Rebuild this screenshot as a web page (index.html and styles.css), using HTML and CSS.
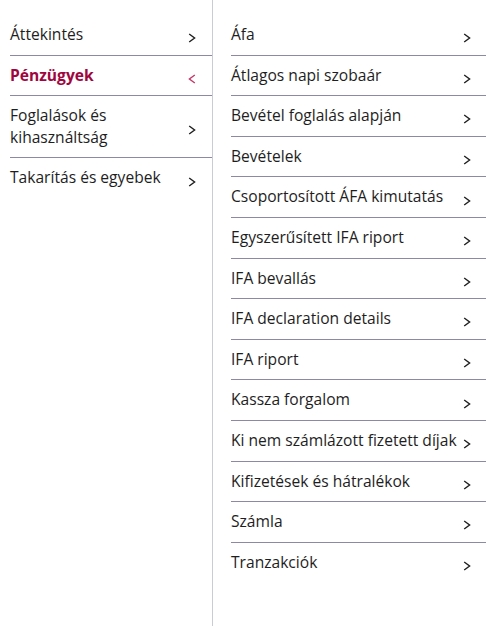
FILE: index.html
```html
<!DOCTYPE html>
<html lang="hu">
<head>
<meta charset="utf-8">
<title>Menü</title>
<link rel="stylesheet" href="styles.css">
</head>
<body>
<div class="layout">
  <nav class="nav nav-left">
    <a class="item"><span class="label">Áttekintés</span><svg class="chev" viewBox="0 0 8 10"><path d="M1.2 1 L6.6 5 L1.2 9"/></svg></a>
    <a class="item active"><span class="label">Pénzügyek</span><svg class="chev" viewBox="0 0 8 10"><path d="M6.8 1 L1.4 5 L6.8 9"/></svg></a>
    <a class="item"><span class="label">Foglalások és<br>kihasználtság</span><svg class="chev" viewBox="0 0 8 10"><path d="M1.2 1 L6.6 5 L1.2 9"/></svg></a>
    <a class="item last"><span class="label">Takarítás és egyebek</span><svg class="chev" viewBox="0 0 8 10"><path d="M1.2 1 L6.6 5 L1.2 9"/></svg></a>
  </nav>
  <nav class="nav nav-right">
    <a class="item"><span class="label">Áfa</span><svg class="chev" viewBox="0 0 8 10"><path d="M1.2 1 L6.6 5 L1.2 9"/></svg></a>
    <a class="item"><span class="label">Átlagos napi szobaár</span><svg class="chev" viewBox="0 0 8 10"><path d="M1.2 1 L6.6 5 L1.2 9"/></svg></a>
    <a class="item"><span class="label">Bevétel foglalás alapján</span><svg class="chev" viewBox="0 0 8 10"><path d="M1.2 1 L6.6 5 L1.2 9"/></svg></a>
    <a class="item"><span class="label">Bevételek</span><svg class="chev" viewBox="0 0 8 10"><path d="M1.2 1 L6.6 5 L1.2 9"/></svg></a>
    <a class="item"><span class="label">Csoportosított ÁFA kimutatás</span><svg class="chev" viewBox="0 0 8 10"><path d="M1.2 1 L6.6 5 L1.2 9"/></svg></a>
    <a class="item"><span class="label">Egyszerűsített IFA riport</span><svg class="chev" viewBox="0 0 8 10"><path d="M1.2 1 L6.6 5 L1.2 9"/></svg></a>
    <a class="item"><span class="label">IFA bevallás</span><svg class="chev" viewBox="0 0 8 10"><path d="M1.2 1 L6.6 5 L1.2 9"/></svg></a>
    <a class="item"><span class="label">IFA declaration details</span><svg class="chev" viewBox="0 0 8 10"><path d="M1.2 1 L6.6 5 L1.2 9"/></svg></a>
    <a class="item"><span class="label">IFA riport</span><svg class="chev" viewBox="0 0 8 10"><path d="M1.2 1 L6.6 5 L1.2 9"/></svg></a>
    <a class="item"><span class="label">Kassza forgalom</span><svg class="chev" viewBox="0 0 8 10"><path d="M1.2 1 L6.6 5 L1.2 9"/></svg></a>
    <a class="item"><span class="label">Ki nem számlázott fizetett díjak</span><svg class="chev" viewBox="0 0 8 10"><path d="M1.2 1 L6.6 5 L1.2 9"/></svg></a>
    <a class="item"><span class="label">Kifizetések és hátralékok</span><svg class="chev" viewBox="0 0 8 10"><path d="M1.2 1 L6.6 5 L1.2 9"/></svg></a>
    <a class="item"><span class="label">Számla</span><svg class="chev" viewBox="0 0 8 10"><path d="M1.2 1 L6.6 5 L1.2 9"/></svg></a>
    <a class="item last"><span class="label">Tranzakciók</span><svg class="chev" viewBox="0 0 8 10"><path d="M1.2 1 L6.6 5 L1.2 9"/></svg></a>
  </nav>
</div>
</body>
</html>
```
FILE: styles.css
```css
html, body {
  margin: 0;
  padding: 0;
  background: #ffffff;
}
body {
  font-family: "Open Sans", "Liberation Sans", sans-serif;
  font-size: 15.6px;
  color: #1e1e1e;
}
.layout {
  display: flex;
  height: 626px;
}
.nav {
  display: flex;
  flex-direction: column;
  padding-top: 15px;
}
.nav-left {
  width: 202px;
  padding-left: 10px;
  border-right: 1px solid #c8ccd8;
}
.nav-right {
  flex: 1;
  padding-left: 18px;
}
.item {
  display: flex;
  align-items: center;
  justify-content: space-between;
  padding: 9px 0;
  line-height: 21.6px;
  border-bottom: 1px solid #8c89a3;
  cursor: pointer;
}
.item.last {
  border-bottom: none;
}
.label {
  flex: 1;
}
.chev {
  width: 8px;
  height: 10px;
  margin-top: 7px;
  margin-right: 16px;
  flex: none;
  fill: none;
  stroke: #1e1e1e;
  stroke-width: 1.4;
}
.nav-right .chev {
  margin-right: 15px;
}
.item.active {
  color: #a0063e;
  font-weight: 700;
}
.item.active .chev {
  stroke: #c2386a;
}
```
